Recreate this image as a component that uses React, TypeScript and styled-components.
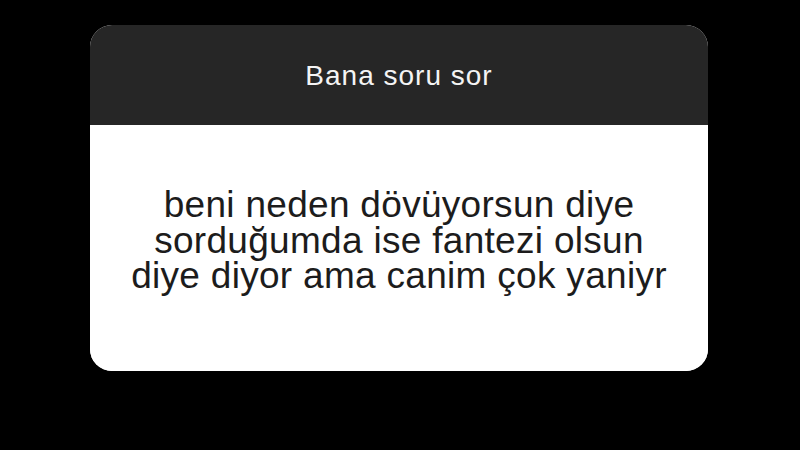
import React from "react";
import styled, { createGlobalStyle } from "styled-components";

const Global = createGlobalStyle`
  html, body { margin: 0; padding: 0; background: #000; }
  body { width: 800px; height: 450px; overflow: hidden; font-family: "Liberation Sans", Arial, sans-serif; }
`;

const Page = styled.div`
  width: 800px;
  height: 450px;
  background: #000;
  box-sizing: border-box;
  padding: 25px 0 0 90px;
`;

const Card = styled.div`
  width: 618px;
  height: 346px;
  border-radius: 22px;
  overflow: hidden;
  display: flex;
  flex-direction: column;
  background: #fff;
`;

const Header = styled.div`
  height: 100px;
  box-sizing: border-box;
  padding-top: 37px;
  background: #262626;
  color: #f4f4f4;
  font-size: 28px;
  line-height: 28px;
  letter-spacing: 1px;
  text-align: center;
`;

const Body = styled.div`
  flex: 1;
  box-sizing: border-box;
  padding-top: 62px;
  background: #fff;
  color: #1c1c1c;
  font-size: 37px;
  line-height: 35.5px;
  letter-spacing: 0.3px;
  text-align: center;
`;

const Line = styled.div`
  white-space: nowrap;
`;

export default function App() {
  return (
    <>
      <Global />
      <Page>
        <Card>
          <Header>Bana soru sor</Header>
          <Body>
            <Line>beni neden dövüyorsun diye</Line>
            <Line>sorduğumda ise fantezi olsun</Line>
            <Line>diye diyor ama canim çok yaniyr</Line>
          </Body>
        </Card>
      </Page>
    </>
  );
}
